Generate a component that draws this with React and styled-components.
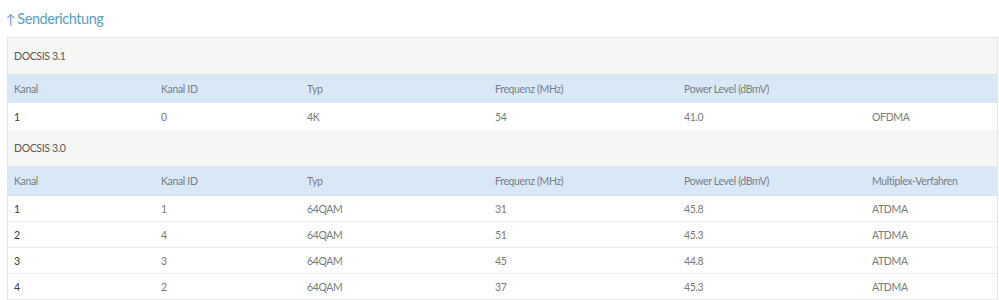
import React from "react";
import styled, { createGlobalStyle } from "styled-components";

const Global = createGlobalStyle`
  html, body { margin: 0; padding: 0; background: #fff; }
  body { font-family: "Lato", "Open Sans", sans-serif; }
`;

const Page = styled.div`
  padding: 0 1px 0 7px;
`;

const Title = styled.h2`
  margin: 0;
  height: 37px;
  display: flex;
  align-items: center;
  gap: 2px;
  font-size: 14.5px;
  font-weight: 400;
  color: #5a9dc9;
  letter-spacing: -0.45px;
`;

const Arrow = styled.span`
  font-size: 13px;
  font-family: "Lato", sans-serif;
  margin-left: -1px;
`;

const Table = styled.div`
  border-left: 1px solid #e4e4e4;
  border-right: 1px solid #e4e4e4;
  border-top: 1px solid #e4e4e4;
  font-size: 10.5px;
  color: #777;
  letter-spacing: -0.35px;
`;

const cols = "147px 146px 188px 189px 188px 1fr";

const Group = styled.div`
  height: 36px;
  background: #f6f6f5;
  display: flex;
  align-items: center;
  padding-left: 6px;
  color: #5a5a5a;
`;

const Row = styled.div`
  display: grid;
  grid-template-columns: ${cols};
  align-items: center;
  height: ${(p) => p.$h}px;
  background: ${(p) => (p.$head ? "#d8e8f6" : "#fff")};
  border-bottom: ${(p) => (p.$line ? "1px solid #ececec" : "none")};
  box-sizing: border-box;
  color: ${(p) => (p.$head ? "#7a7e84" : "#7a7a7a")};
`;

const Cell = styled.div`
  padding-left: 6px;
  white-space: nowrap;
  color: ${(p) => (p.$strong ? "#3a3a3a" : "inherit")};
`;

const heads = ["Kanal", "Kanal ID", "Typ", "Frequenz (MHz)", "Power Level (dBmV)"];

const d31 = [["1", "0", "4K", "54", "41.0", "OFDMA"]];
const d30 = [
  ["1", "1", "64QAM", "31", "45.8", "ATDMA"],
  ["2", "4", "64QAM", "51", "45.3", "ATDMA"],
  ["3", "3", "64QAM", "45", "44.8", "ATDMA"],
  ["4", "2", "64QAM", "37", "45.3", "ATDMA"],
];

function DataRow({ r, h, line }) {
  return (
    <Row $h={h} $line={line}>
      {r.map((c, i) => (
        <Cell key={i} $strong={i === 0}>{c}</Cell>
      ))}
    </Row>
  );
}

export default function App() {
  return (
    <>
      <Global />
      <Page>
        <Title>
          <Arrow>↑</Arrow>Senderichtung
        </Title>
        <Table>
          <Group>DOCSIS 3.1</Group>
          <Row $head $h={29}>
            {heads.map((h) => (
              <Cell key={h}>{h}</Cell>
            ))}
            <Cell />
          </Row>
          {d31.map((r, i) => (
            <DataRow key={i} r={r} h={27} />
          ))}
          <Group>DOCSIS 3.0</Group>
          <Row $head $h={30}>
            {heads.map((h) => (
              <Cell key={h}>{h}</Cell>
            ))}
            <Cell>Multiplex-Verfahren</Cell>
          </Row>
          {d30.map((r, i) => (
            <DataRow key={i} r={r} h={26} line />
          ))}
        </Table>
      </Page>
    </>
  );
}
